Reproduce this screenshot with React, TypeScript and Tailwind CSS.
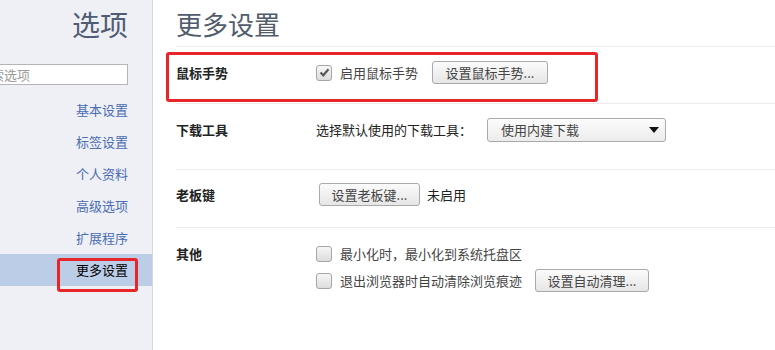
import type { ReactNode } from "react";

const font = { fontFamily: '"Noto Sans CJK SC", "Noto Sans", sans-serif' };

const navItems = ["基本设置", "标签设置", "个人资料", "高级选项", "扩展程序", "更多设置"];

function Checkbox({ checked = false }: { checked?: boolean }) {
  return (
    <span className="flex h-[16px] w-[16px] shrink-0 items-center justify-center rounded-[3px] border border-[#a6a6a6] bg-gradient-to-b from-[#f7f7f7] to-[#dcdcdc]">
      {checked && (
        <svg width="11" height="11" viewBox="0 0 11 11">
          <path d="M1.5 5.5 L4.3 8.3 L9.5 2.2" fill="none" stroke="#5a5a5a" strokeWidth="2.2" />
        </svg>
      )}
    </span>
  );
}

function Button({ children, w }: { children: ReactNode; w: string }) {
  return (
    <button
      className={`flex h-[23px] ${w} items-center justify-center rounded-[3px] border border-[#aaaaaa] bg-gradient-to-b from-[#fbfbfb] to-[#e6e6e6] text-[13px] text-[#444]`}
    >
      {children}
    </button>
  );
}

function Row({ label, children, className }: { label: string; children: ReactNode; className: string }) {
  return (
    <div className={`flex border-b border-[#ebebeb] ${className}`}>
      <div className="w-[140px] shrink-0 text-[13px] font-bold leading-[23px] text-[#222]">{label}</div>
      <div className="flex flex-col gap-[4px]">{children}</div>
    </div>
  );
}

export default function App() {
  return (
    <div className="flex h-[350px] w-[775px] overflow-hidden bg-white" style={font}>
      <aside className="relative flex h-full w-[153px] shrink-0 flex-col overflow-hidden border-r border-[#d3d7df] bg-[#eef0f6]">
        <div className="pr-[24px] pt-[6px] text-right text-[28px] leading-[36px] text-[#4f5c73]">选项</div>
        <div className="mt-[22px] flex justify-end pr-[24px]">
          <input
            className="h-[21px] w-[154px] shrink-0 border border-[#b5b5b5] bg-white px-[3px] text-[13px] text-[#999] outline-none placeholder:text-[#999]"
            placeholder="搜索选项"
          />
        </div>
        <nav className="mt-[9px] flex flex-col">
          {navItems.map((item, i) => (
            <div
              key={item}
              className={`h-[32px] pr-[24px] text-right text-[13px] leading-[32px] ${
                i === navItems.length - 1 ? "bg-[#bccde7] text-black" : "text-[#4b6cb3]"
              }`}
            >
              {item}
            </div>
          ))}
        </nav>
        <div className="absolute left-[57px] top-[258px] h-[34px] w-[81px] rounded-[3px] border-[3px] border-[#e8262a]" />
      </aside>

      <main className="relative flex-1 pl-[23px] text-[13px] text-[#222]">
        <h1 className="h-[47px] border-b border-[#ebebeb] pt-[6px] text-[26px] font-normal leading-[36px] text-[#525c6d]">
          更多设置
        </h1>

        <Row label="鼠标手势" className="h-[57px] pt-[14px]">
          <div className="flex h-[23px] items-center">
            <Checkbox checked />
            <span className="ml-[8px] text-[#444]">启用鼠标手势</span>
            <span className="ml-[14px]">
              <Button w="w-[116px]">设置鼠标手势...</Button>
            </span>
          </div>
        </Row>

        <Row label="下载工具" className="h-[66px] pt-[14px]">
          <div className="flex h-[24px] items-center">
            <span className="w-[171px]">选择默认使用的下载工具：</span>
            <div className="flex h-[24px] w-[179px] items-center justify-between rounded-[3px] border border-[#aaaaaa] bg-gradient-to-b from-[#fcfcfc] to-[#ececec] pl-[13px] pr-[6px] text-[#444]">
              <span>使用内建下载</span>
              <svg width="10" height="6" viewBox="0 0 10 6">
                <path d="M0 0 H10 L5 6 Z" fill="#111" />
              </svg>
            </div>
          </div>
        </Row>

        <Row label="老板键" className="h-[58px] pt-[13px]">
          <div className="flex h-[23px] items-center">
            <span className="ml-[3px]">
              <Button w="w-[101px]">设置老板键...</Button>
            </span>
            <span className="ml-[7px]">未启用</span>
          </div>
        </Row>

        <div className="flex pt-[14px]">
          <div className="w-[140px] shrink-0 text-[13px] font-bold leading-[23px] text-[#222]">其他</div>
          <div className="flex flex-col">
            <div className="flex h-[23px] items-center">
              <Checkbox />
              <span className="ml-[8px] text-[#444]">最小化时，最小化到系统托盘区</span>
            </div>
            <div className="mt-[4px] flex h-[23px] items-center">
              <Checkbox />
              <span className="ml-[8px] text-[#444]">退出浏览器时自动清除浏览痕迹</span>
              <span className="ml-[13px]">
                <Button w="w-[114px]">设置自动清理...</Button>
              </span>
            </div>
          </div>
        </div>

        <div className="absolute left-[13px] top-[52px] h-[50px] w-[432px] rounded-[3px] border-[3px] border-[#e8262a]" />
      </main>
    </div>
  );
}
